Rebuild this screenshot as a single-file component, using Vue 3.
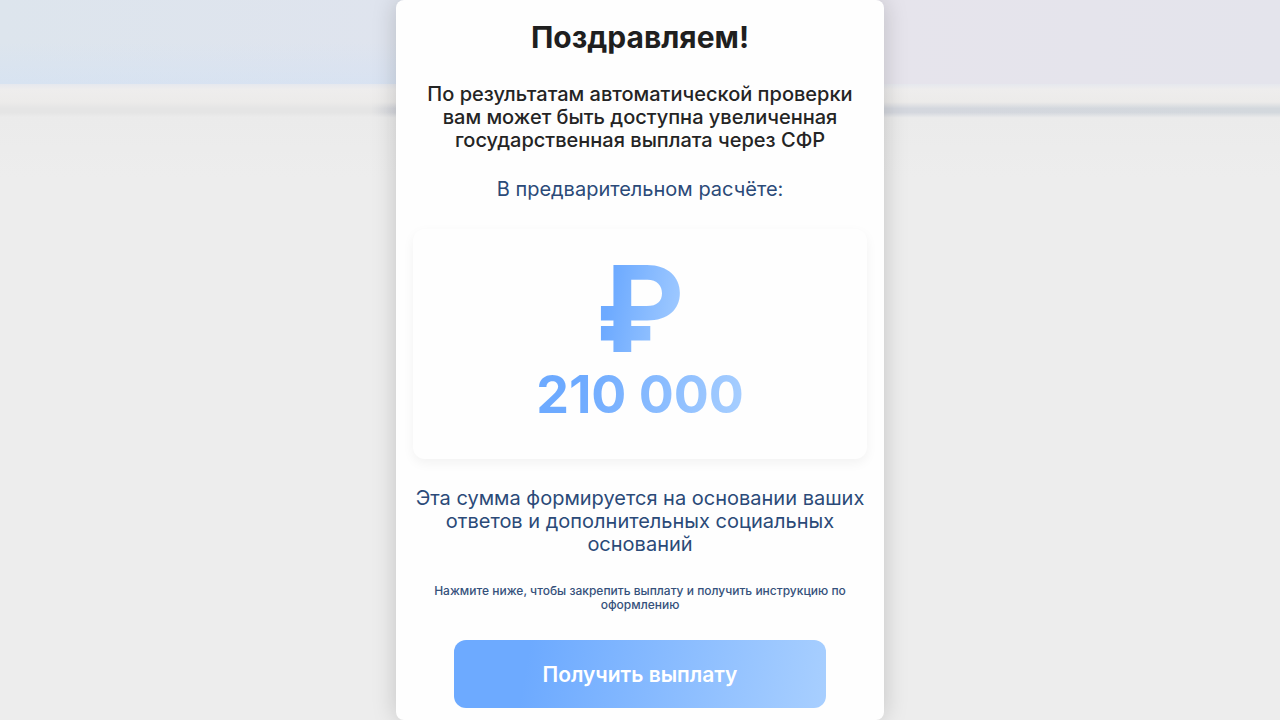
<script setup>
const currency = '₽'
const amount = '210 000'
</script>

<template>
  <div class="page">
    <div class="backdrop" aria-hidden="true">
      <div class="sky"></div>
      <div class="ledge"></div>
      <div class="rail"></div>
      <div class="wall"></div>
    </div>
    <main class="card">
      <h1 class="title">Поздравляем!</h1>
      <p class="lead">
        По результатам автоматической проверки<br />
        вам может быть доступна увеличенная<br />
        государственная выплата через СФР
      </p>
      <p class="text">В предварительном расчёте:</p>
      <section class="sum">
        <span class="currency">{{ currency }}</span>
        <span class="amount">{{ amount }}</span>
      </section>
      <p class="text">
        Эта сумма формируется на основании ваших<br />
        ответов и дополнительных социальных<br />
        оснований
      </p>
      <p class="hint">
        Нажмите ниже, чтобы закрепить выплату и получить инструкцию по<br />
        оформлению
      </p>
      <button type="button" class="action">Получить выплату</button>
    </main>
  </div>
</template>

<style>
body {
  margin: 0;
  background: #ededed;
}
</style>

<style scoped>
.page {
  position: relative;
  display: flex;
  justify-content: center;
  align-items: flex-start;
  min-height: 100vh;
  font-family: Inter, "Open Sans", sans-serif;
}
.backdrop {
  position: absolute;
  inset: 0;
  display: flex;
  flex-direction: column;
}
.sky {
  height: 84px;
  background:
    linear-gradient(to bottom, transparent 50%, rgba(210, 225, 245, 0.5)) left / 32% 100% no-repeat,
    linear-gradient(to right, #dde5ed, #dfe4ee 30%, #e6e4ec 70%, #e4e4ec);
}
.ledge {
  height: 18px;
  background: linear-gradient(to bottom, #e6e8ee, #eeeded 30%, #ecebea);
}
.rail {
  height: 16px;
  background:
    linear-gradient(to bottom, #ecebea, transparent 40%, transparent 65%, #ececec),
    linear-gradient(to right, #e5e5e5 29%, #d4d6dc 31%, #d4d7de 70%, #d3d8dd);
}
.wall {
  flex: 1;
  background: linear-gradient(to bottom, #ebebeb, #ededed 60px);
}
.card {
  position: relative;
  box-sizing: border-box;
  display: flex;
  flex-direction: column;
  align-items: stretch;
  width: 100%;
  max-width: 488px;
  padding: 20px 17px 12px;
  border-radius: 8px;
  background: #fefefe;
  box-shadow: 0 0 24px rgba(0, 0, 0, 0.18);
  text-align: center;
}
.title {
  margin: 0 0 29px;
  color: #1f1f1f;
  font-size: 30px;
  font-weight: 700;
  line-height: 34px;
}
.lead,
.text {
  margin: 0 0 28px;
  color: #2b4a78;
  font-size: 20px;
  font-weight: 400;
  line-height: 23px;
}
.lead {
  margin-bottom: 26px;
  color: #242424;
  font-weight: 500;
}
.sum {
  display: flex;
  flex-direction: column;
  align-items: center;
  gap: 2px;
  margin-bottom: 28px;
  padding: 24px 16px 36px;
  border-radius: 12px;
  box-shadow: 0 4px 12px rgba(0, 0, 0, 0.05);
}
.currency,
.amount {
  background: linear-gradient(100deg, #6daaff 20%, #a8cfff);
  -webkit-background-clip: text;
  background-clip: text;
  color: transparent;
  font-weight: 700;
}
.currency {
  font-size: 120px;
  line-height: 112px;
}
.amount {
  font-size: 52px;
  line-height: 56px;
}
.hint {
  margin: 0 0 28px;
  color: #35517b;
  font-size: 12px;
  font-weight: 500;
  line-height: 14px;
}
.action {
  align-self: center;
  width: 82%;
  height: 68px;
  border: 0;
  border-radius: 12px;
  background: linear-gradient(100deg, #6daaff 20%, #a8cfff);
  color: #fff;
  font: 600 21px/23px Inter, "Open Sans", sans-serif;
  cursor: pointer;
}
</style>
